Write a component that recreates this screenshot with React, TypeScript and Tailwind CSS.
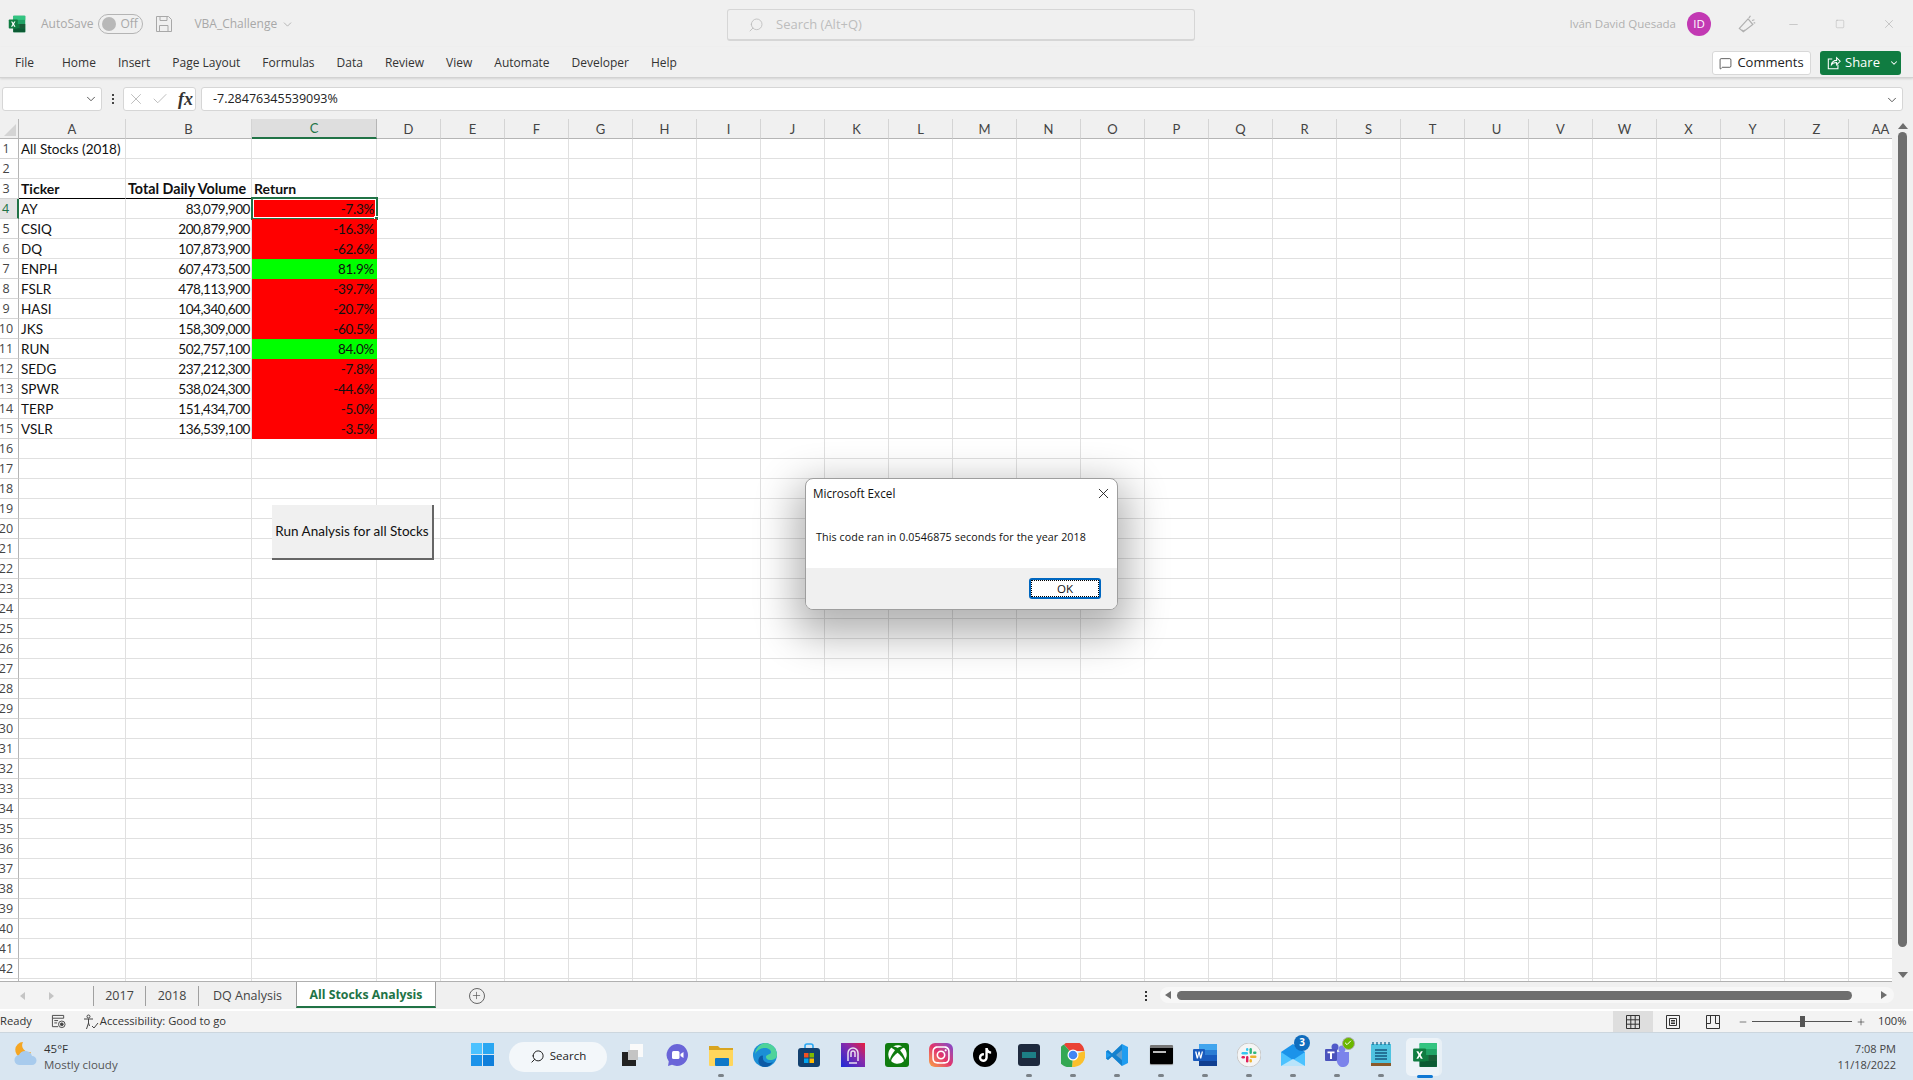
import React from 'react';
import { Check, ChevronDown, Minus, Plus, Search, X, MessageSquare, Square, Video } from 'lucide-react';
import { FaXbox, FaTiktok, FaInstagram } from 'react-icons/fa';

const UI_FONT = { fontFamily: '"Open Sans", "Noto Sans", sans-serif' };

const COLUMNS = ['A', 'B', 'C', 'D', 'E', 'F', 'G', 'H', 'I', 'J', 'K', 'L', 'M', 'N', 'O', 'P', 'Q', 'R', 'S', 'T', 'U', 'V', 'W', 'X', 'Y', 'Z', 'AA'];

const STOCKS = [
  ['AY', '83,079,900', '-7.3%'],
  ['CSIQ', '200,879,900', '-16.3%'],
  ['DQ', '107,873,900', '-62.6%'],
  ['ENPH', '607,473,500', '81.9%'],
  ['FSLR', '478,113,900', '-39.7%'],
  ['HASI', '104,340,600', '-20.7%'],
  ['JKS', '158,309,000', '-60.5%'],
  ['RUN', '502,757,100', '84.0%'],
  ['SEDG', '237,212,300', '-7.8%'],
  ['SPWR', '538,024,300', '-44.6%'],
  ['TERP', '151,434,700', '-5.0%'],
  ['VSLR', '136,539,100', '-3.5%'],
];

const ExcelLogo = ({ size = 16 }: { size?: number }) => (
  <svg width={size} height={size} viewBox="0 0 24 24">
    <rect x="7" y="1" width="16" height="22" rx="1" fill="#21a366" />
    <rect x="7" y="1" width="16" height="5.5" fill="#33c481" />
    <rect x="7" y="12" width="8" height="5.5" fill="#107c41" />
    <rect x="15" y="12" width="8" height="5.5" fill="#185c37" />
    <rect x="7" y="17.5" width="16" height="5.5" fill="#0b5a33" />
    <rect x="1" y="6" width="12" height="12" rx="1" fill="#107c41" />
    <path d="M4 8.5h1.900L7 10.700l1.200-2.200H10l-2 3.500 2 3.500H8.100L7 13.300 5.800 15.500H4l2-3.500z" fill="#fff" />
  </svg>
);

const TaskIcon = ({ children, dot = false }: { children?: React.ReactNode; dot?: boolean }) => (
  <div className="relative flex h-[48px] w-[44px] items-center justify-center pb-[4px]">
    {children}
    {dot && <div className="absolute bottom-[4px] h-[3px] w-[6px] rounded-full bg-[#7b8288]" />}
  </div>
);

function ColumnHeader() {
  return (
    <>
      <div className="relative h-[20px] border-r border-b border-[#b5b5b5] bg-[#f0f0f0]">
        <div className="absolute right-[2px] bottom-[2px] h-0 w-0 border-t-[12px] border-l-[12px] border-t-transparent border-l-transparent border-r-[0px] [border-bottom:12px_solid_#d4d4d4]" />
      </div>
      {COLUMNS.map((c) => (
        <div
          key={c}
          className={`flex h-[20px] items-center justify-center border-r text-[13px] ${
            c === 'C'
              ? 'border-b-2 border-r-[#b5b5b5] border-b-[#217346] bg-[#dedede] text-[#217346]'
              : 'border-b border-r-[#d4d4d4] border-b-[#b5b5b5] bg-[#f0f0f0] text-[#444]'
          }`}
        >
          {c}
        </div>
      ))}
    </>
  );
}

function Sheet() {
  const rows = Array.from({ length: 43 }, (_, i) => i + 1);
  const gridline = 'border-r border-b border-[#e0e0e0]';
  return (
    <div
      className="grid h-[863px] w-[1892px] grid-cols-[19px_107px_126px_125px_repeat(24,64px)] auto-rows-[20px] overflow-hidden border-b-[1px] border-[#b0b0b0] bg-white text-[13.5px] leading-[20px] text-[#111]"
      style={{ fontFamily: 'Lato, "Open Sans", sans-serif' }}
    >
      <ColumnHeader />
      {rows.map((r) => {
        const stock = r >= 4 && r <= 15 ? STOCKS[r - 4] : null;
        const positive = stock ? !stock[2].startsWith('-') : false;
        return (
          <React.Fragment key={r}>
            <div
              className={`flex h-[20px] items-center justify-center border-b pr-[6px] text-[12.5px] ${
                r === 4
                  ? 'border-r-2 border-r-[#217346] border-b-[#d4d4d4] bg-[#e4e4e4] text-[#217346]'
                  : 'border-r border-r-[#b5b5b5] border-b-[#d4d4d4] text-[#444]'
              }`}
              style={UI_FONT}
            >
              {r < 43 ? r : ''}
            </div>
            <div className={`h-[20px] truncate pl-[2px] ${r === 3 ? 'border-r border-b border-r-[#e0e0e0] border-b-black text-[14px] font-bold' : gridline}`}>
              {r === 1 && 'All Stocks (2018)'}
              {r === 3 && 'Ticker'}
              {stock && stock[0]}
            </div>
            <div className={`h-[20px] pl-[2px] whitespace-nowrap ${r === 3 ? 'border-r border-b border-r-[#e0e0e0] border-b-black text-[14.3px] font-bold' : gridline} ${stock ? 'pr-[1px] text-right tracking-[-0.45px]' : ''}`}>
              {r === 3 && 'Total Daily Volume'}
              {stock && stock[1]}
            </div>
            <div
              className={`relative h-[20px] pl-[2px] ${
                r === 3 ? `${gridline} text-[14px] font-bold` : stock ? (positive ? 'bg-[#00ff00] pr-[3px] text-right tracking-[-0.3px]' : 'bg-[#ff0000] pr-[3px] text-right tracking-[-0.3px]') : gridline
              }`}
            >
              {r === 3 && 'Return'}
              {stock && stock[2]}
              {r === 4 && (
                <div className="absolute -top-[2px] -right-[1px] -bottom-[1px] -left-[1px] border-2 border-[#217346]">
                  <div className="h-full w-full border border-white" />
                  <div className="absolute -right-[3px] -bottom-[3px] h-[5px] w-[5px] border border-white bg-[#217346]" />
                </div>
              )}
            </div>
            {COLUMNS.slice(3).map((c) => (
              <div key={c} className={`h-[20px] ${gridline}`} />
            ))}
          </React.Fragment>
        );
      })}
    </div>
  );
}

function TitleBar() {
  return (
    <div className="relative flex h-[47px] items-center pt-[1px] text-[#a8a8a8]">
      <div className="ml-[8px]">
        <ExcelLogo size={18} />
      </div>
      <span className="ml-[15px] text-[12px]">AutoSave</span>
      <div className="ml-[5px] flex h-[20px] w-[45px] items-center rounded-full border border-[#b4b4b4]">
        <div className="ml-[3px] h-[14px] w-[14px] rounded-full bg-[#b8b8b8]" />
        <span className="ml-[4px] text-[12px]">Off</span>
      </div>
      <svg className="ml-[13px]" width="16" height="16" viewBox="0 0 16 16" fill="none" stroke="#a8a8a8">
        <path d="M.5.5h12l3 3v12H.500z M4 .5v4h7v-4 M3.500 15.500v-6h8.500v6" />
      </svg>
      <span className="ml-[22px] text-[12px]">VBA_Challenge</span>
      <ChevronDown className="ml-[4px]" size={13} strokeWidth={1.5} />
      <div className="absolute top-[9px] left-[727px] flex h-[32px] w-[468px] items-center rounded-[3px] border border-b-2 border-[#d6d6d6] pl-[20px] text-[#bdbdbd]">
        <Search size={16} strokeWidth={1.3} className="-scale-x-100" />
        <span className="ml-[12px] text-[13px]">Search (Alt+Q)</span>
      </div>
      <div className="ml-auto flex items-center">
        <span className="text-[11.5px] text-[#b0b0b0]">Iván David Quesada</span>
        <div className="ml-[11px] flex h-[24px] w-[24px] items-center justify-center rounded-full bg-[#c239b3] text-[11.500px] text-white">ID</div>
        <svg className="ml-[26px]" width="19" height="19" viewBox="0 0 24 24" fill="none" stroke="#b0b0b0" strokeWidth="1.500">
          <path d="M3 17 14 5l6 7-12 9z M6 19c1 1 3 1 4 0 M15 4l2-3 M19 7l3-1 M21 10h2" />
        </svg>
        <Minus className="ml-[31px]" size={13} strokeWidth={1} color="#a8a8a8" />
        <Square className="ml-[35px]" size={10} strokeWidth={1} color="#a8a8a8" />
        <X className="mr-[17px] ml-[37px]" size={14} strokeWidth={1} color="#a8a8a8" />
      </div>
    </div>
  );
}

function RibbonTabs() {
  const tabs = ['Home', 'Insert', 'Page Layout', 'Formulas', 'Data', 'Review', 'View', 'Automate', 'Developer', 'Help'];
  return (
    <div className="relative z-10 flex h-[31px] items-center border-b border-[#d2d2d2] pt-[2px] pl-[15px] text-[12px] text-[#333] shadow-[0_1px_2px_rgba(0,0,0,0.12)]">
      <span className="mr-[28px]">File</span>
      <div className="flex gap-[22px]">
        {tabs.map((t) => (
          <span key={t}>{t}</span>
        ))}
      </div>
      <div className="mr-[12px] ml-auto flex items-center gap-[9px]">
        <div className="flex h-[24px] w-[99px] items-center justify-center gap-[5px] rounded-[3px] border border-[#d8d8d8] bg-white text-[13px] text-[#222]">
          <MessageSquare size={13} strokeWidth={1.3} />
          Comments
        </div>
        <div className="flex h-[24px] w-[81px] items-center rounded-[3px] bg-[#107c41] pl-[7px] text-[13px] text-white">
          <svg width="14" height="14" viewBox="0 0 16 16" fill="none" stroke="#fff" strokeWidth="1.200">
            <path d="M6 3.500H1.500v11h11V10 M5 10c0-3 3-5 6-5V2l4 4-4 4V7.500c-3 0-5 1-6 2.500z" />
          </svg>
          <span className="ml-[4px]">Share</span>
          <ChevronDown className="ml-[9px]" size={10} strokeWidth={2.500} />
        </div>
      </div>
    </div>
  );
}

function FormulaBar() {
  return (
    <div className="flex h-[41px] items-start pt-[9px] pl-[2px]">
      <div className="flex h-[24px] w-[100px] items-center justify-end rounded-[3px] border border-[#d6d6d6] bg-white pr-[3px]">
        <ChevronDown size={14} strokeWidth={1.5} color="#444" />
      </div>
      <div className="ml-[9px] flex h-[24px] w-[3px] flex-col items-center justify-center gap-[2px]">
        <div className="h-[2px] w-[2px] bg-[#444]" />
        <div className="h-[2px] w-[2px] bg-[#444]" />
        <div className="h-[2px] w-[2px] bg-[#444]" />
      </div>
      <div className="ml-[9px] flex h-[24px] w-[73px] items-center rounded-[3px] border border-[#d6d6d6] bg-white pl-[3px]">
        <X size={18} strokeWidth={1} color="#a8a8a8" />
        <Check className="ml-[6px]" size={18} strokeWidth={1} color="#a8a8a8" />
        <span className="ml-[9px] text-[18px] leading-none font-bold text-[#333] italic" style={{ fontFamily: '"Liberation Serif", serif' }}>
          fx
        </span>
      </div>
      <div className="ml-[5px] flex h-[24px] w-[1702px] items-center rounded-[3px] border border-[#d6d6d6] bg-white pt-[1px] pl-[11px] text-[12.500px] text-[#222]">
        -7.28476345539093%
        <ChevronDown className="mr-[3px] ml-auto" size={14} strokeWidth={1.5} color="#444" />
      </div>
    </div>
  );
}

function VerticalScroll() {
  return (
    <div className="flex h-[863px] w-[21px] flex-col items-center pt-[4px] pb-[4px]">
      <div className="h-0 w-0 border-r-[5px] border-b-[6px] border-l-[5px] border-r-transparent border-b-[#6e6e6e] border-l-transparent" />
      <div className="mt-[3px] h-[815px] w-[9px] rounded-full bg-[#6e6e6e]" />
      <div className="mt-auto h-0 w-0 border-t-[6px] border-r-[5px] border-l-[5px] border-t-[#6e6e6e] border-r-transparent border-l-transparent" />
    </div>
  );
}

function SheetTabs() {
  return (
    <div className="flex h-[29px] items-start border-b-2 border-white bg-[#f0f0f0] text-[12.500px] text-[#444]">
      <div className="flex h-[27px] w-[93px] items-center bg-[#f3f3f3] pl-[20px]">
        <div className="h-0 w-0 border-t-[4px] border-r-[5px] border-b-[4px] border-t-transparent border-r-[#c4c4c4] border-b-transparent" />
        <div className="ml-[24px] h-0 w-0 border-t-[4px] border-b-[4px] border-l-[5px] border-t-transparent border-b-transparent border-l-[#c4c4c4]" />
      </div>
      <div className="mt-[4px] flex h-[20px] w-[52px] items-center justify-center border-l border-[#a0a0a0]">2017</div>
      <div className="mt-[4px] flex h-[20px] w-[53px] items-center justify-center border-l border-[#a0a0a0]">2018</div>
      <div className="mt-[4px] flex h-[20px] w-[98px] items-center justify-center border-l border-[#a0a0a0]">DQ Analysis</div>
      <div className="flex h-[26px] w-[140px] items-center justify-center border-x border-b-2 border-x-[#a0a0a0] border-b-[#217346] bg-white pt-[2px] text-[12.3px] font-bold text-[#217346]">All Stocks Analysis</div>
      <div className="flex h-[27px] w-[56px] items-center justify-center pl-[25px]">
        <div className="flex h-[16px] w-[16px] shrink-0 items-center justify-center rounded-full border border-[#666]">
          <Plus size={11} strokeWidth={1.5} color="#555" />
        </div>
      </div>
      <div className="ml-[653px] flex h-[27px] flex-col items-center justify-center gap-[2px]">
        <div className="h-[2px] w-[2px] bg-[#333]" />
        <div className="h-[2px] w-[2px] bg-[#333]" />
        <div className="h-[2px] w-[2px] bg-[#333]" />
      </div>
      <div className="mt-[5px] ml-[13px] flex h-[16px] w-[734px] items-center rounded-full bg-[#f7f7f7] pl-[5px]">
        <div className="h-0 w-0 border-t-[4px] border-r-[6px] border-b-[4px] border-t-transparent border-r-[#6e6e6e] border-b-transparent" />
        <div className="ml-[6px] h-[9px] w-[675px] rounded-full bg-[#6e6e6e]" />
        <div className="ml-[29px] h-0 w-0 border-t-[4px] border-b-[4px] border-l-[6px] border-t-transparent border-b-transparent border-l-[#6e6e6e]" />
      </div>
    </div>
  );
}

function StatusBar() {
  return (
    <div className="flex h-[21px] items-center bg-[#f3f3f3] text-[11.2px] text-[#333]">
      <span>Ready</span>
      <svg className="ml-[19px]" width="15" height="15" viewBox="0 0 16 16" fill="none" stroke="#444">
        <path d="M1.500 1.500h12v3h-12z M1.500 4.500v9h6 M3.500 7h4 M3.500 9.500h3" />
        <circle cx="11.500" cy="11" r="3.500" />
        <circle cx="11.500" cy="11" r="1.500" fill="#444" />
      </svg>
      <svg className="ml-[17px]" width="16" height="16" viewBox="0 0 16 16" fill="none" stroke="#444">
        <circle cx="5.500" cy="2.500" r="1.500" />
        <path d="M1 5h9 M5.500 5v4l-2 6 M5.500 9l1 3 M9 12l2 2 4-5" />
      </svg>
      <span className="ml-[1px]">Accessibility: Good to go</span>
      <div className="ml-auto flex h-[21px] w-[40px] items-center justify-center bg-[#dedede]">
        <svg width="14" height="14" viewBox="0 0 14 14" fill="none" stroke="#333">
          <path d="M.5.5h13v13H.500z M.5 4.800h13 M.5 9.200h13 M4.800.5v13 M9.200.5v13" />
        </svg>
      </div>
      <svg className="ml-[13px]" width="14" height="14" viewBox="0 0 14 14" fill="none" stroke="#333">
        <path d="M.5.5h13v13H.500z M3.500 3.500h7v7h-7z M5 5.500h4 M5 7h4 M5 8.500h4" />
      </svg>
      <svg className="ml-[26px]" width="14" height="14" viewBox="0 0 14 14" fill="none" stroke="#333">
        <path d="M.5.5h13v13H.500z M.5 8.500h4v-8 M9.500.5v8h4" />
      </svg>
      <Minus className="ml-[18px]" size={10} strokeWidth={1.500} />
      <div className="relative mx-[4px] h-[1px] w-[100px] bg-[#555]">
        <div className="absolute -top-[5px] left-[48px] h-[11px] w-[5px] bg-[#555]" />
      </div>
      <Plus size={10} strokeWidth={1.500} />
      <span className="mr-[7px] ml-[12px] w-[28px] text-[11.200px]">100%</span>
    </div>
  );
}

function Taskbar() {
  return (
    <div className="relative flex h-[48px] items-center border-t border-[#ccd6de] bg-[#d9e6f1] text-[#333]">
      <div className="absolute top-[8px] left-[12px] flex items-center">
        <svg width="26" height="26" viewBox="0 0 26 26">
          <path d="M11 1a8 8 0 1 0 8 10 7 7 0 0 1-8-10z" fill="#f5a623" />
          <path d="M8 24a5 5 0 0 1-1-10 7 7 0 0 1 13 1 4.500 4.500 0 0 1 0 9z" fill="#a8cbed" />
        </svg>
      </div>
      <div className="absolute top-[8px] left-[44px] text-[11.500px] leading-[16px]">
        <div>45°F</div>
        <div className="text-[#555]">Mostly cloudy</div>
      </div>
      <div className="ml-[460px] flex h-[48px] items-center">
        <TaskIcon>
          <svg width="23" height="23" viewBox="0 0 24 24">
            <path d="M0 0h11.500v11.500H0z" fill="#4cc2ff" />
            <path d="M12.500 0H24v11.500H12.500z" fill="#2aa7f2" />
            <path d="M0 12.500h11.500V24H0z" fill="#1b93ea" />
            <path d="M12.500 12.500H24V24H12.500z" fill="#0f7fdb" />
          </svg>
        </TaskIcon>
        <div className="ml-[5px] flex h-[30px] w-[98px] items-center justify-center gap-[5px] rounded-full bg-[#f3f7fa] pb-[1px] text-[11.500px] text-[#222]">
          <Search size={15} strokeWidth={1.600} className="-scale-x-100" />
          Search
        </div>
        <div className="ml-[4px] flex">
          <TaskIcon>
            <svg width="24" height="24" viewBox="0 0 24 24">
              <rect x="9" y="1" width="13" height="13" fill="#fafafa" />
              <rect x="1" y="9" width="14" height="14" fill="#222" />
              <rect x="7" y="7" width="10" height="10" fill="#c4c4c4" />
            </svg>
          </TaskIcon>
          <TaskIcon>
            <svg width="24" height="24" viewBox="0 0 24 24">
              <path d="M12 1a11 11 0 1 1-5 20.800L3 23l.8-4.500A11 11 0 0 1 12 1z" fill="#6a65d8" />
              <rect x="7" y="8" width="7.500" height="8" rx="1.500" fill="#fff" />
              <path d="M15.500 11l3-2v6l-3-2z" fill="#fff" />
            </svg>
          </TaskIcon>
          <TaskIcon dot>
            <svg width="24" height="24" viewBox="0 0 24 24">
              <path d="M0 3h9l2 2h13v3H0z" fill="#d9a520" />
              <path d="M0 7h24v15a1 1 0 0 1-1 1H1a1 1 0 0 1-1-1z" fill="#ffd65c" />
              <rect x="6" y="15" width="14" height="8" rx="1" fill="#0f78c8" />
            </svg>
          </TaskIcon>
          <TaskIcon>
            <svg width="24" height="24" viewBox="0 0 24 24">
              <circle cx="12" cy="12" r="12" fill="#1b8fd6" />
              <path d="M12 0a12 12 0 0 1 12 12c0 3-3 5-7 5-3 0-4-1.500-4-3 0-3 5-2 5-5 0-2-3-4-6-4-4 0-8 2-10 6A12 12 0 0 1 12 0z" fill="#4ed39a" />
              <path d="M10 13c-1 4 2 7 6 7 2 0 3-.5 4-1-2 3-5 5-8 5-5 0-8-5-6-9 1-2 3-3 4-2z" fill="#0c5aa6" />
            </svg>
          </TaskIcon>
          <TaskIcon>
            <svg width="24" height="24" viewBox="0 0 24 24">
              <path d="M8 6V3a2 2 0 0 1 2-2h4a2 2 0 0 1 2 2v3" fill="none" stroke="#2aa7f2" strokeWidth="1.600" />
              <rect x="1" y="5" width="22" height="19" rx="3" fill="#12406f" />
              <rect x="7" y="10" width="4.500" height="4.500" fill="#f25022" />
              <rect x="12.500" y="10" width="4.500" height="4.500" fill="#7fba00" />
              <rect x="7" y="15.500" width="4.500" height="4.500" fill="#00a4ef" />
              <rect x="12.500" y="15.500" width="4.500" height="4.500" fill="#ffb900" />
            </svg>
          </TaskIcon>
          <TaskIcon>
            <svg width="24" height="24" viewBox="0 0 24 24">
              <defs>
                <linearGradient id="podGrad" x1="0" y1="1" x2="1" y2="0">
                  <stop offset="0" stopColor="#1a2bd8" />
                  <stop offset="0.600" stopColor="#8c2aa8" />
                  <stop offset="1" stopColor="#ea1d3c" />
                </linearGradient>
              </defs>
              <rect width="24" height="24" fill="url(#podGrad)" />
              <path d="M7 18V10a5 5 0 0 1 10 0v8 M10 14v-4a2 2 0 0 1 4 0v4 M8 20h8" fill="none" stroke="#e8e0f0" strokeWidth="1.500" />
            </svg>
          </TaskIcon>
          <TaskIcon>
            <div className="flex h-[24px] w-[24px] items-center justify-center rounded-[3px] bg-[#107c10]">
              <FaXbox size={19} color="#fff" />
            </div>
          </TaskIcon>
          <TaskIcon>
            <div className="flex h-[24px] w-[24px] items-center justify-center rounded-[6px] bg-gradient-to-tr from-[#f9a13a] via-[#e1306c] to-[#7c3fd0]">
              <FaInstagram size={20} color="#fff" />
            </div>
          </TaskIcon>
          <TaskIcon>
            <div className="flex h-[24px] w-[24px] items-center justify-center rounded-full bg-black">
              <FaTiktok size={14} color="#fff" />
            </div>
          </TaskIcon>
          <TaskIcon dot>
            <div className="flex h-[22px] w-[22px] items-center justify-center rounded-[3px] bg-[#1e2a3e]">
              <div className="h-[6px] w-[14px] bg-[#1d7f86]" />
            </div>
          </TaskIcon>
          <TaskIcon dot>
            <svg width="24" height="24" viewBox="0 0 24 24">
              <path d="M12 12 3 1.600A12 12 0 0 1 23.500 8H12z" fill="#ea4335" />
              <path d="M12 12 23.500 8A12 12 0 0 1 11 24z" fill="#fbc02d" />
              <path d="M12 12 11 24A12 12 0 0 1 3 1.600z" fill="#34a853" />
              <circle cx="12" cy="12" r="5.500" fill="#fff" />
              <circle cx="12" cy="12" r="4.300" fill="#4285f4" />
            </svg>
          </TaskIcon>
          <TaskIcon dot>
            <svg width="24" height="24" viewBox="0 0 24 24">
              <path d="M17 1 23 4v16l-6 3-10-9.500L3 17l-2-1.500V8.500L3 7l4 3.500z" fill="#1f9cf0" />
              <path d="M17 7v10l-6-5z" fill="#d9e6f1" />
              <path d="M17 1 7 10.500 3 7l-2 1.500 5 3.500-5 3.500L3 17l4-3.500L17 23z" fill="#0e6fb8" opacity="0.600" />
            </svg>
          </TaskIcon>
          <TaskIcon dot>
            <div className="flex h-[19px] w-[23px] flex-col rounded-[1px] border-t-[3px] border-[#777] bg-black pt-[3px] pl-[3px] shadow-[0_1px_1px_#888]">
              <div className="h-[2px] w-[13px] bg-[#bbb]" />
            </div>
          </TaskIcon>
          <TaskIcon dot>
            <svg width="25" height="24" viewBox="0 0 25 24">
              <rect x="6" y="1" width="18" height="22" rx="1" fill="#2b7cd3" />
              <rect x="6" y="1" width="18" height="6" fill="#41a5ee" />
              <rect x="6" y="12" width="18" height="6" fill="#185abd" />
              <rect x="6" y="18" width="18" height="5" fill="#103f91" />
              <rect x="0" y="6" width="12" height="12" rx="1" fill="#185abd" />
              <path d="M2 8.500h1.500l1 4.500 1-4.500h1.200l1 4.500 1-4.500H10l-1.700 7H7l-1-4.500-1 4.500H3.700z" fill="#fff" />
            </svg>
          </TaskIcon>
          <TaskIcon dot>
            <svg width="24" height="24" viewBox="0 0 24 24">
              <circle cx="12" cy="12" r="12" fill="#f5f5f5" stroke="#c8c8c8" />
              <rect x="12.500" y="5" width="2.400" height="6" rx="1.200" fill="#2eb67d" />
              <rect x="16" y="8.500" width="3.500" height="2.400" rx="1.200" fill="#2eb67d" />
              <rect x="13" y="12.600" width="6.500" height="2.400" rx="1.200" fill="#ecb22e" />
              <rect x="12.500" y="16" width="2.400" height="3.500" rx="1.200" fill="#ecb22e" />
              <rect x="9" y="13" width="2.400" height="6.500" rx="1.200" fill="#e01e5a" />
              <rect x="4.500" y="13" width="3.500" height="2.400" rx="1.200" fill="#e01e5a" />
              <rect x="4.500" y="9" width="6.500" height="2.400" rx="1.200" fill="#36c5f0" />
              <rect x="9" y="5" width="2.400" height="3" rx="1.200" fill="#36c5f0" />
            </svg>
          </TaskIcon>
          <TaskIcon dot>
            <div className="relative">
              <svg width="24" height="24" viewBox="0 0 24 24">
                <path d="M0 9 12 1l12 8v14H0z" fill="#1b93ea" />
                <path d="M0 9l12 8 12-8v14H0z" fill="#4cc2ff" />
                <path d="M0 23l12-7 12 7z" fill="#b8e4fb" />
              </svg>
              <div className="absolute -top-[8px] -right-[5px] flex h-[16px] w-[16px] items-center justify-center rounded-full bg-[#0f6cbd] text-[10px] font-bold text-white">3</div>
            </div>
          </TaskIcon>
          <TaskIcon dot>
            <div className="relative">
              <svg width="25" height="24" viewBox="0 0 25 24">
                <circle cx="17" cy="6" r="3.500" fill="#7b83eb" />
                <path d="M10 9h14v8a6 6 0 0 1-12 2z" fill="#7b83eb" />
                <circle cx="10" cy="4" r="3.500" fill="#5059c9" />
                <rect x="0" y="6" width="12" height="12" rx="1" fill="#4b53bc" />
                <path d="M2.500 8.500h7v1.800H7V16H5v-5.700H2.500z" fill="#fff" />
              </svg>
              <div className="absolute -top-[6px] -right-[5px] flex h-[13px] w-[13px] items-center justify-center rounded-full border border-[#aaa] bg-[#6bb700]">
                <Check size={8} color="#fff" strokeWidth={3} />
              </div>
            </div>
          </TaskIcon>
          <TaskIcon dot>
            <svg width="22" height="25" viewBox="0 0 22 25">
              <rect x="1" y="2" width="20" height="19" fill="#4fc3e0" />
              <rect x="1" y="21" width="20" height="3" fill="#8a5a2b" />
              <path d="M3 0v3 M7 0v3 M11 0v3 M15 0v3 M19 0v3" stroke="#0e5f86" strokeWidth="1.200" />
              <path d="M5 8h12 M5 11h12 M5 14h12 M5 17h12" stroke="#175a80" strokeWidth="1.300" />
            </svg>
          </TaskIcon>
          <div className="relative flex h-[48px] w-[44px] items-center justify-center pb-[4px]">
            <div className="absolute top-[5px] left-[3px] h-[38px] w-[36px] rounded-[5px] border-r-[3px] border-[#e8f0f6] bg-[#edf3f8]" />
            <div className="relative">
              <ExcelLogo size={26} />
            </div>
            <div className="absolute bottom-[3px] h-[3px] w-[16px] rounded-full bg-[#0f78d4]" />
          </div>
        </div>
      </div>
      <div className="mr-[17px] ml-auto text-right text-[11px] leading-[16px] text-[#444]">
        <div>7:08 PM</div>
        <div>11/18/2022</div>
      </div>
    </div>
  );
}

function MessageDialog() {
  return (
    <div className="absolute top-[478px] left-[805px] h-[132px] w-[313px] overflow-hidden rounded-[8px] border border-[#9e9e9e] bg-white shadow-[0_16px_40px_10px_rgba(0,0,0,0.3)]">
      <div className="flex h-[89px] flex-col">
        <div className="mt-[6px] ml-[7px] flex items-center justify-between pr-[5px] text-[11.700px] text-[#111]">
          Microsoft Excel
          <X size={17} strokeWidth={1.2} />
        </div>
        <div className="mt-[26px] ml-[10px] text-[10.700px] tracking-[0.1px] text-[#111]">This code ran in 0.0546875 seconds for the year 2018</div>
      </div>
      <div className="flex h-[43px] justify-end bg-[#f0f0f0] pt-[10px] pr-[16px]">
        <div className="flex h-[21px] w-[72px] items-center justify-center rounded-[3px] border-2 border-[#0067c0] bg-white text-[11.500px] text-[#111]">
          <div className="flex h-full w-full items-center justify-center border border-dotted border-black">OK</div>
        </div>
      </div>
    </div>
  );
}

export default function App() {
  return (
    <div className="relative flex h-[1080px] w-[1913px] flex-col overflow-hidden bg-[#f0f0f0]" style={UI_FONT}>
      <TitleBar />
      <RibbonTabs />
      <FormulaBar />
      <div className="flex">
        <Sheet />
        <VerticalScroll />
      </div>
      <SheetTabs />
      <StatusBar />
      <Taskbar />
      <div
        className="absolute top-[505px] left-[272px] flex h-[55px] w-[162px] items-center justify-center border-r-2 border-b-2 border-[#666] bg-[#f0f0f0] text-[13.5px] text-[#111]"
        style={{ fontFamily: 'Lato, sans-serif' }}
      >
        Run Analysis for all Stocks
      </div>
      <MessageDialog />
    </div>
  );
}
